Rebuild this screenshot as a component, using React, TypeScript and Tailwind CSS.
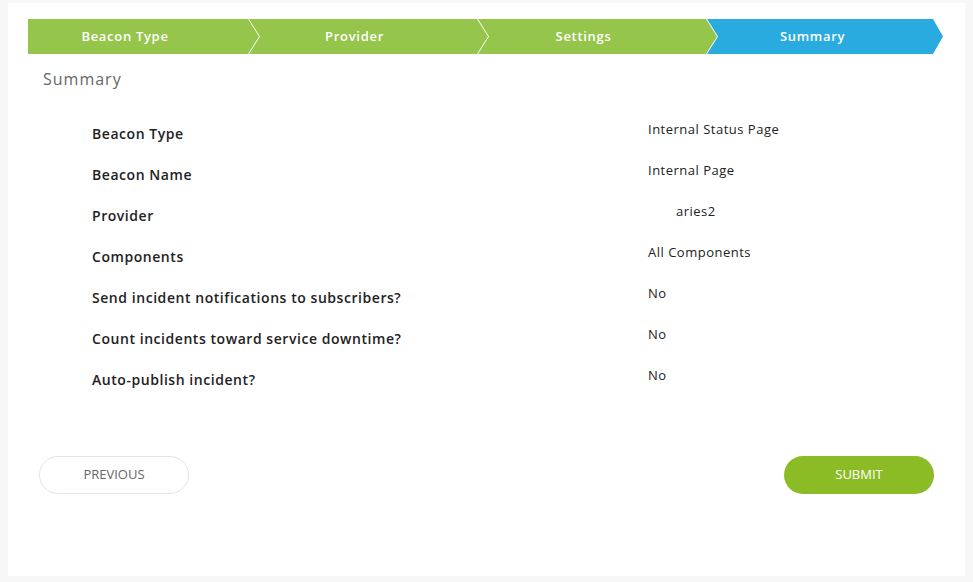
const steps = [
  { label: "Beacon Type", cls: "w-[231px] pr-[37px] bg-[#95c54b]", clip: "[clip-path:polygon(0_0,calc(100%-11px)_0,100%_50%,calc(100%-11px)_100%,0_100%)]" },
  { label: "Provider", cls: "w-[239px] -ml-[10px] pr-[28px] bg-[#95c54b]", clip: "[clip-path:polygon(0_0,calc(100%-11px)_0,100%_50%,calc(100%-11px)_100%,0_100%,11px_50%)]" },
  { label: "Settings", cls: "w-[239px] -ml-[10px] pr-[28px] bg-[#95c54b]", clip: "[clip-path:polygon(0_0,calc(100%-11px)_0,100%_50%,calc(100%-11px)_100%,0_100%,11px_50%)]" },
  { label: "Summary", cls: "w-[236px] -ml-[10px] pr-[25px] bg-[#2aabe0]", clip: "[clip-path:polygon(0_0,calc(100%-10px)_0,100%_50%,calc(100%-10px)_100%,0_100%,11px_50%)]" },
];

const rows: { label: string; value: string; indent?: boolean }[] = [
  { label: "Beacon Type", value: "Internal Status Page" },
  { label: "Beacon Name", value: "Internal Page" },
  { label: "Provider", value: "aries2", indent: true },
  { label: "Components", value: "All Components" },
  { label: "Send incident notifications to subscribers?", value: "No" },
  { label: "Count incidents toward service downtime?", value: "No" },
  { label: "Auto-publish incident?", value: "No" },
];

export default function App() {
  return (
    <div className="w-[973px] h-[582px] bg-[#f7f7f7] pt-[3px] pl-[8px] font-['Open_Sans',sans-serif]">
      <div className="w-[957px] h-[573px] bg-white pt-[16px] px-[20px]">
        {/* Wizard steps */}
        <div className="flex h-[35px]">
          {steps.map((s) => (
            <div
              key={s.label}
              className={`h-full flex items-center justify-center text-white text-[13px] font-semibold tracking-[0.7px] ${s.cls} ${s.clip}`}
            >
              {s.label}
            </div>
          ))}
        </div>

        <h2 className="mt-[13px] pl-[15px] text-[16px] leading-[24px] font-medium tracking-[1px] text-[#666]">
          Summary
        </h2>

        {/* Summary rows */}
        <div className="mt-[22px] pl-[64px]">
          {rows.map((r) => (
            <div key={r.label} className="flex h-[41px] items-center">
              <span className="w-[556px] text-[14px] font-semibold tracking-[0.55px] text-[#222]">
                {r.label}
              </span>
              <span
                className={`-mt-[8px] text-[13px] tracking-[0.5px] text-[#222] ${r.indent ? "pl-[28px]" : ""}`}
              >
                {r.value}
              </span>
            </div>
          ))}
        </div>

        {/* Actions */}
        <div className="mt-[56px] flex justify-between pl-[11px] pr-[11px]">
          <button className="w-[150px] h-[38px] rounded-full border border-[#e5e5e5] text-[13px] text-[#666] uppercase">
            Previous
          </button>
          <button className="w-[150px] h-[38px] rounded-full bg-[#8bbc25] text-[13px] text-white uppercase">
            Submit
          </button>
        </div>
      </div>
    </div>
  );
}
